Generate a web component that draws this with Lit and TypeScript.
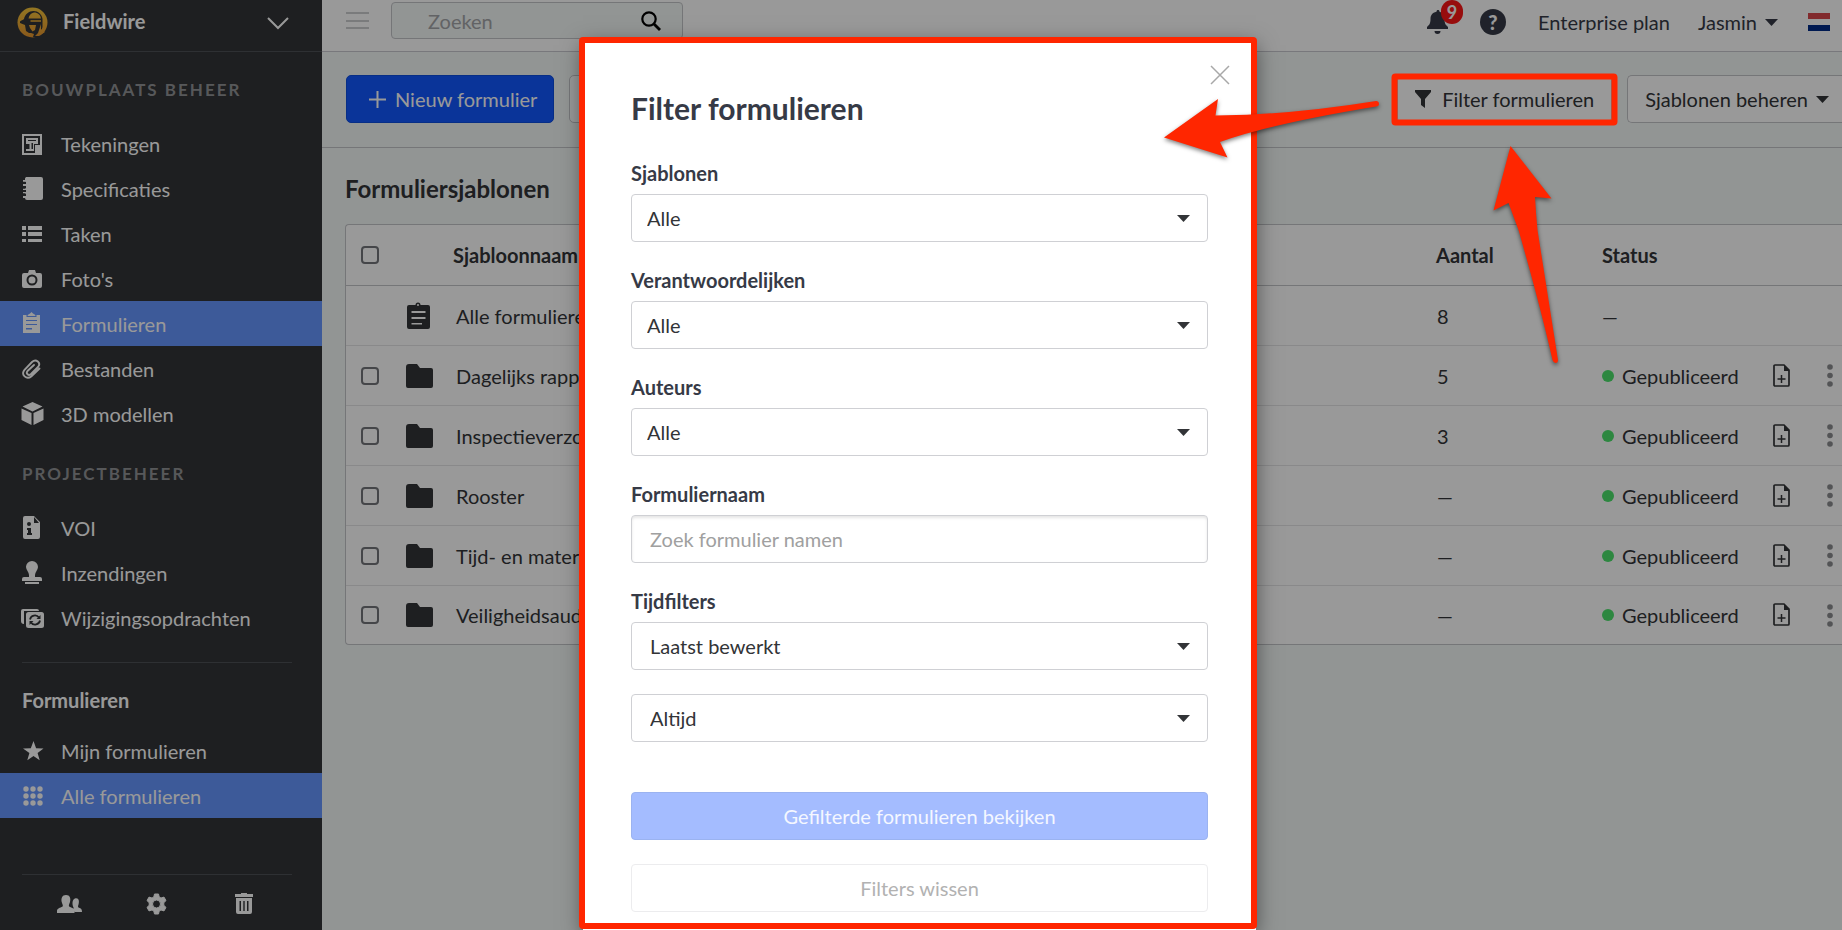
import { LitElement, html, css, svg, nothing } from "lit";
import { customElement } from "lit/decorators.js";

const shapes: Record<string, unknown> = {
  plan: svg`<path fill-rule="evenodd" d="M0 1h20v21H0zM2 3v17h8v-2H6v-2h1V9H4.500V5H16v4h-4v11h6V3z"/><path d="M2 3h16v9h-5v8H2z" fill="#323437"/><path d="M4 5h12v6h-4v7H4v-2h2v-5H4z"/><path d="M5.500 11h2v5h-2zM9.500 10h1.500v6H9.500zM6 7h8v1H6z" fill="#323437"/><path d="M13 12h6v9h-6z"/>`,
  notebook: svg`<path d="M4 0h15a2 2 0 0 1 2 2v19a2 2 0 0 1-2 2H5a2 2 0 0 1-2-2H1v-2h3v-2H1v-2h3v-2H1v-2h3V9H1V7h3V5H1V3h2a3 3 0 0 1 1-3z"/><path d="M0 5.500h3.500M0 11h3.500M0 17h3.500" stroke="#323437" stroke-width="1.500"/>`,
  list: svg`<path d="M0 3h4v4H0zM6 3h14v4H6zM0 9h4v4H0zM6 9h14v4H6zM0 16h4v3H0zM6 16h14v3H6z"/>`,
  camera: svg`<path fill-rule="evenodd" d="M6 5l1-3h6l1 3h4a2 2 0 0 1 2 2v11a2 2 0 0 1-2 2H2a2 2 0 0 1-2-2V7a2 2 0 0 1 2-2zM10 6.500a5.500 5.500 0 1 0 0 11 5.500 5.500 0 0 0 0-11zm0 2a3.500 3.500 0 1 1 0 7 3.500 3.500 0 0 1 0-7z"/>`,
  clipboard: svg`<path fill-rule="evenodd" d="M1 3h3.500v2h10V3H18v18H1zM4 8v1h11V8zM4 12v1h11v-1zM4 16v1.500h6V16z"/><path d="M5.500 4c0-1.500 1.500-1.500 2.500-2.500L9.500 0 11 1.500c1 1 2.500 1 2.500 2.500z"/>`,
  clip: svg`<path d="M17.500 9.500l-8 7.700c-5 4.300-11-1.700-7-6.400L10 3c4-3.800 9.500.8 6 5l-7 7c-2.500 2.300-5.500-.5-3.500-3L12 6" fill="none" stroke="currentColor" stroke-width="1.900" stroke-linecap="round"/>`,
  cube: svg`<path d="M10.500 0L20.500 4.500 10.500 9.500.5 4.500zM-.500 6.500L9.500 11v12L-.5 18zM21.500 6.500V18l-10 5V11z"/>`,
  info: svg`<path fill-rule="evenodd" d="M3 0h9l6 6v15a2 2 0 0 1-2 2H3a2 2 0 0 1-2-2V2a2 2 0 0 1 2-2zM12 1v6h5zM7 6a2 2 0 1 0 0 4 2 2 0 0 0 0-4zM5 12v2h1v3H5v2h5v-2H9v-5z"/>`,
  stamp: svg`<path d="M10 0a6 6 0 0 1 6 6c0 3-3 5-3 8v2h5a2 2 0 0 1 2 2v2H0v-2a2 2 0 0 1 2-2h5v-2c0-3-3-5-3-8a6 6 0 0 1 6-6zM3 21h14v2H3z"/>`,
  changes: svg`<path d="M2 0h14a2 2 0 0 1 2 2H3v13a3 3 0 0 1-3-3V2a2 2 0 0 1 2-2z" transform="translate(-1 2)"/><rect x="4" y="5" width="18" height="16" rx="2.500"/><path d="M8 12.500a5 5 0 0 1 9-2M18 13.500a5 5 0 0 1-9 2" fill="none" stroke="#323437" stroke-width="1.800"/><path d="M18.500 8v4h-4zM7.500 18v-4h4z" fill="#323437"/>`,
  star: svg`<path d="M11.500 1l2.600 7.200 7.400.2-5.900 4.600 2.100 7.200-6.200-4.200-6.200 4.200 2.100-7.200L1 8.400l7.800-.2z"/>`,
  grid: svg`<g>${[4, 11, 18].map((y) => [4, 11, 18].map((x) => svg`<circle cx=${x} cy=${y} r="2.700"/>`))}</g>`,
  people: svg`<path d="M13.500 16.500c3-.6 3.500-1 3-2-1.500-3-1.500-8 1.500-9 4-1 4.500 3 3.500 6-.5 1.700-1 2.500.5 3.200 2 .8 3 1.300 3 4.300h-7z"/><path d="M9 2c4 0 5 3.500 4 7-.6 2-1.500 3-1 4.200 1 1.300 5 1.500 5.500 4.300V20H0v-2.500c.5-2.800 5-3 5.700-4.300.6-1.200-.6-2.200-1-4.200C4 5.500 5 2 9 2z"/>`,
  gear: svg`<path fill-rule="evenodd" stroke="currentColor" stroke-linejoin="round" d="M8.500 0h4l.7 3 1.800 1 3-.9 2 3.500-2.200 2.100v2.600l2.200 2.100-2 3.500-3-.9-1.800 1-.7 3h-4l-.7-3-1.800-1-3 .9-2-3.500 2.200-2.100V8.700L1 6.600l2-3.500 3 .9 1.800-1zm2 6a4 4 0 0 0 0 8 4 4 0 0 0 0-8z"/>`,
  trash: svg`<path fill-rule="evenodd" d="M6 0h6v1h6v3H0V1h6zM1 5h16v14a2 2 0 0 1-2 2H3a2 2 0 0 1-2-2zM4.500 8v10H6V8zM8.300 8v10h1.400V8zM12 8v10h1.500V8z"/>`,
  search: svg`<circle cx="8" cy="8" r="6.700" fill="none" stroke="currentColor" stroke-width="2.200"/><path d="M13 13l6 6" stroke="currentColor" stroke-width="2.800"/>`,
  menu: svg`<path d="M0 1h23M0 9h23M0 16h23" stroke="currentColor" stroke-width="1.500"/>`,
  chevron: svg`<path d="M1 1l10 10L21 1" fill="none" stroke="currentColor" stroke-width="2"/>`,
  bell: svg`<path d="M11 0c1 0 1.500.7 1.500 1.700 3.500.8 5 3.800 5 7.300 0 5 1.500 6 3.500 8v2H0v-2c2-2 3.500-3 3.500-8 0-3.500 1.500-6.500 6-7.300C9.500.7 10 0 11 0zM7.500 21h6a3 3 0 0 1-6 0z"/>`,
  funnel: svg`<path d="M0 0h16v2l-6 7v9l-4-3V9L0 2z"/>`,
  plus: svg`<path d="M8.500 0v17M0 8.500h17" stroke="currentColor" stroke-width="2"/>`,
  caret: svg`<path d="M0 0h13L6.500 7z"/>`,
  close: svg`<path d="M1 1l18 18M19 1L1 19" stroke="currentColor" stroke-width="1.500"/>`,
  folder: svg`<path d="M3 0h8l3 4h11a2 2 0 0 1 2 2v16a2 2 0 0 1-2 2H2a2 2 0 0 1-2-2V3a3 3 0 0 1 3-3z"/>`,
  forms: svg`<path fill-rule="evenodd" d="M3 3h6.500a2.500 2.500 0 0 1 5 0H22a2 2 0 0 1 2 2v20a2 2 0 0 1-2 2H3a2 2 0 0 1-2-2V5a2 2 0 0 1 2-2zM12 2a1 1 0 1 0 0 2 1 1 0 0 0 0-2zM5.500 9v2h14V9zM5.500 15v2h14v-2zM5.500 21v1.500H16V21z"/>`,
  doc: svg`<path d="M2 0h9l5 5v15a1 1 0 0 1-1 1H2a1 1 0 0 1-1-1V1a1 1 0 0 1 1-1z" fill="none" stroke="currentColor" stroke-width="1.700"/><path d="M11 0l5 5v1h-5z"/><path d="M8.500 10v8M4.500 14h8" stroke="currentColor" stroke-width="1.500"/>`,
  dots: svg`<circle cx="3" cy="3" r="2.800"/><circle cx="3" cy="11.500" r="2.800"/><circle cx="3" cy="20" r="2.800"/>`,
  flag: svg`<path d="M0 0h22v6H0z" fill="#d8474c"/><path d="M0 6h22v6H0z" fill="#fff"/><path d="M0 12h22v6H0z" fill="#002a87"/>`,
};

const glyph = (name: string, w: number, h: number) => html`<svg
  class="glyph" width=${w} height=${h} viewBox="0 0 ${w} ${h}" aria-hidden="true">${shapes[name]}</svg>`;

const base = css`
  * { box-sizing: border-box; }
  button, input, select { font: inherit; color: inherit; margin: 0; }
  button { cursor: pointer; }
  .glyph { display: block; flex: none; fill: currentColor; overflow: visible; }
`;

@customElement("fw-sidebar")
class FwSidebar extends LitElement {
  static styles = [base, css`
    :host { display: flex; flex-direction: column; width: 322px; flex: none; background: #323437; color: #fff; }
    .project { display: flex; align-items: center; gap: 15px; height: 52px; padding: 0 33px 6px 17px; border: 0; border-bottom: 1px solid #4e5155; background: none; font-weight: 700; text-align: left; }
    .project .name { flex: 1; line-height: 24px; padding-bottom: 4px; }
    h2 { margin: 0; padding: 28px 22px 21px; font-size: 17px; line-height: 20px; letter-spacing: 2px; text-transform: uppercase; color: #919396; }
    h3 { margin: 0; padding: 25px 22px 16px; font-size: 20px; line-height: 24px; }
    .item { display: flex; align-items: center; gap: 17px; height: 45px; padding: 0 20px; color: inherit; text-decoration: none; }
    .item .icon { display: flex; justify-content: center; width: 24px; }
    .item.active { background: #6696ff; }
    .rule { height: 1px; margin: 22px 30px 0 22px; background: #4e5155; }
    .tools { display: flex; margin: auto 30px 0 22px; padding: 12px 4px 10px; border-top: 1px solid #4e5155; }
    .tools button { display: flex; flex: 1; align-items: center; justify-content: center; height: 33px; padding: 0; border: 0; background: none; }
  `];

  item(icon: string, label: string, active = false, w = 20, h = 22) {
    return html`<a class="item ${active ? "active" : ""}" href="#"><span class="icon">${glyph(icon, w, h)}</span>${label}</a>`;
  }

  render() {
    return html`
      <button class="project">
        <svg class="glyph" width="31" height="31" viewBox="0 0 31 31" aria-hidden="true">
          <defs><linearGradient id="gold" gradientUnits="userSpaceOnUse" x1="0" y1="0" x2="0" y2="31"><stop offset="0" stop-color="#f5c63a"/><stop offset="1" stop-color="#e6942f"/></linearGradient></defs>
          <circle cx="15.500" cy="15.500" r="15" fill="url(#gold)"/>
          <path d="M3 14.500C5 13 6.500 13 7 12 8 7 12 4 16.500 4S25 7.500 25.500 12v8L24 25l-2 5h-6l1-3-3-1-2 0-3-2-1-6-5-2z" fill="#323437"/>
          <path d="M11.500 11.500c.5-3.500 2.500-5.500 5.500-6 4 0 6.500 2.500 7 6zM13.500 13.300h10.500v1.500H13.500zM12 18h7l-1 5-2.500 1.500L13 21zM24 17v5l4 3-6 4h-4l3-3z" fill="url(#gold)"/>
        </svg>
        <span class="name">Fieldwire</span>${glyph("chevron", 22, 12)}
      </button>
      <h2>Bouwplaats beheer</h2>
      <nav>
        ${this.item("plan", "Tekeningen")}
        ${this.item("notebook", "Specificaties", false, 20, 23)}
        ${this.item("list", "Taken")}
        ${this.item("camera", "Foto's")}
        ${this.item("clipboard", "Formulieren", true, 20, 23)}
        ${this.item("clip", "Bestanden", false, 20, 20)}
        ${this.item("cube", "3D modellen", false, 21, 23)}
      </nav>
      <h2>Projectbeheer</h2>
      <nav>
        ${this.item("info", "VOI", false, 20, 23)}
        ${this.item("stamp", "Inzendingen", false, 20, 23)}
        ${this.item("changes", "Wijzigingsopdrachten", false, 20, 22)}
      </nav>
      <div class="rule"></div>
      <h3>Formulieren</h3>
      <nav>
        ${this.item("star", "Mijn formulieren", false, 20, 22)}
        ${this.item("grid", "Alle formulieren", true, 20, 22)}
      </nav>
      <div class="tools">
        <button aria-label="Personen">${glyph("people", 25, 21)}</button>
        <button aria-label="Instellingen">${glyph("gear", 21, 20)}</button>
        <button aria-label="Prullenbak">${glyph("trash", 18, 21)}</button>
      </div>`;
  }
}

@customElement("fw-topbar")
class FwTopbar extends LitElement {
  static styles = [base, css`
    :host { display: flex; align-items: flex-start; height: 52px; padding: 2px 12px 0 24px; border-bottom: 1px solid #c8c9cf; background: #fff; }
    .plain { display: flex; align-items: center; padding: 0; border: 0; background: none; }
    .menu { height: 37px; color: #bcbdc0; margin-right: 22px; }
    .search { display: flex; align-items: center; width: 292px; height: 37px; padding: 0 22px 0 36px; border: 1px solid #c4c5c9; border-radius: 4px; background: #f4f8f7; }
    .search input { flex: 1; min-width: 0; padding: 0; border: 0; outline: 0; background: none; }
    .search input::placeholder { color: #a3a5a8; opacity: 1; }
    .right { display: flex; align-items: center; height: 40px; margin-left: auto; color: #363a46; }
    .bell { position: relative; }
    .badge { position: absolute; left: 14px; top: -10px; width: 22px; height: 24px; border-radius: 12px; background: #fc1616; color: #fff; font-size: 18px; line-height: 24px; font-weight: 700; text-align: center; }
    .help { justify-content: center; width: 26px; height: 26px; margin: 0 32px; border-radius: 50%; background: #363a46; color: #fff; font-weight: 900; line-height: 26px; }
    .user { gap: 8px; margin: 0 31px 0 28px; }
  `];
  render() {
    return html`
      <button class="plain menu" aria-label="Menu">${glyph("menu", 23, 17)}</button>
      <label class="search"><input type="search" placeholder="Zoeken" aria-label="Zoeken" />${glyph("search", 19, 19)}</label>
      <div class="right">
        <button class="plain bell" aria-label="Meldingen">${glyph("bell", 21, 24)}<span class="badge">9</span></button>
        <button class="plain help" aria-label="Help">?</button>
        <span>Enterprise plan</span>
        <button class="plain user">Jasmin ${glyph("caret", 12, 6)}</button>
        <button class="plain" aria-label="Taal">${glyph("flag", 22, 18)}</button>
      </div>`;
  }
}

@customElement("fw-templates")
class FwTemplates extends LitElement {
  rows = [
    { name: "Alle formulieren", count: "8", all: true },
    { name: "Dagelijks rapport", count: "5" },
    { name: "Inspectieverzoek", count: "3" },
    { name: "Rooster", count: "—" },
    { name: "Tijd- en materiaal", count: "—" },
    { name: "Veiligheidsaudit", count: "—" },
  ] as { name: string; count: string; all?: boolean }[];

  static styles = [base, css`
    :host { display: block; padding: 24px 0 0 23px; color: #323437; }
    h1 { margin: 0 0 19px; font-size: 24px; line-height: 33px; }
    .frame { border: 1px solid #c4c5c9; border-right: 0; border-radius: 4px 0 0 4px; background: #fff; }
    table { width: 100%; table-layout: fixed; border-spacing: 0; }
    th, td { height: 60px; padding: 0; border-bottom: 1px solid #e4e5e6; text-align: left; font-weight: 400; white-space: nowrap; }
    th { height: 61px; border-color: #c4c5c9; font-weight: 700; }
    tr:last-child td { height: 58px; border-bottom: 0; }
    thead tr:last-child th { border-bottom: 1px solid #c4c5c9; }
    .c-check { width: 60px; } .c-icon { width: 47px; } .c-count { width: 166px; }
    .c-status { width: 171px; } .c-add { width: 51px; } .c-more { width: 18px; }
    .check { padding-left: 15px; }
    input { display: block; appearance: none; width: 18px; height: 18px; border: 2px solid #73757a; border-radius: 4px; background: #fff; }
    .name { padding-left: 3px; }
    .count { padding-left: 1px; }
    .status { display: flex; align-items: center; gap: 8px; }
    .status::before { content: ""; width: 12px; height: 12px; border-radius: 50%; background: #4be16b; }
    .act { display: block; padding: 0; border: 0; background: none; }
    .more { color: #8b8c8f; padding-left: 3px; }
  `];

  render() {
    return html`
      <h1>Formuliersjablonen</h1>
      <div class="frame"><table>
        <colgroup><col class="c-check"><col class="c-icon"><col><col class="c-count"><col class="c-status"><col class="c-add"><col class="c-more"></colgroup>
        <thead><tr>
          <th class="check"><input type="checkbox" aria-label="Alles selecteren" /></th><th></th>
          <th>Sjabloonnaam</th><th>Aantal</th><th>Status</th><th></th><th></th>
        </tr></thead>
        <tbody>${this.rows.map((r) => html`<tr>
          <td class="check">${r.all ? nothing : html`<input type="checkbox" aria-label=${r.name} />`}</td>
          <td>${r.all ? glyph("forms", 24, 27) : glyph("folder", 27, 24)}</td>
          <td class="name">${r.name}</td>
          <td class="count">${r.count}</td>
          <td>${r.all ? "—" : html`<span class="status">Gepubliceerd</span>`}</td>
          <td>${r.all ? nothing : html`<button class="act" aria-label="Formulier toevoegen">${glyph("doc", 17, 22)}</button>`}</td>
          <td>${r.all ? nothing : html`<button class="act more" aria-label="Meer">${glyph("dots", 6, 23)}</button>`}</td>
        </tr>`)}</tbody>
      </table></div>`;
  }
}

@customElement("fw-filter-dialog")
class FwFilterDialog extends LitElement {
  static styles = [base, css`
    :host { position: relative; display: block; width: 673px; min-height: 891px; padding: 53px 48px 18px; background: #fff; color: #363a46; box-shadow: 0 6px 20px rgba(0, 0, 0, .5); }
    .outline { position: absolute; inset: -2px -1px 1px -4px; border: 6px solid #ff2600; border-radius: 4px; pointer-events: none; }
    .close { position: absolute; top: 26px; right: 26px; display: block; padding: 0; border: 0; background: none; color: #a8a8a8; }
    h2 { margin: 0 0 37px; font-size: 30px; line-height: 32px; }
    .group { display: flex; flex-direction: column; margin-bottom: 26px; }
    label { font-weight: 700; line-height: 24px; margin-bottom: 9px; }
    .field { display: grid; align-items: center; color: #323437; }
    .field + .field { margin-top: 24px; }
    .field > * { grid-area: 1 / 1; }
    .field .glyph { justify-self: end; margin-right: 18px; pointer-events: none; }
    select, input { appearance: none; width: 100%; height: 48px; padding: 0 15px; border: 1px solid #cfd0d4; border-radius: 4px; outline: 0; background: #fff; }
    .wide { padding: 0 18px; }
    input { box-shadow: inset 0 2px 3px rgba(0, 0, 0, .1); }
    input::placeholder { color: #a0a0a0; opacity: 1; }
    .action { display: block; width: 100%; height: 48px; border: 1px solid #9bb3f0; border-radius: 4px; background: #a4bcff; color: #f4f7ff; }
    .first { margin-top: 50px; }
    .action + .action { margin-top: 24px; border-color: #ececee; background: #fff; color: #b2b2b2; }
  `];

  select(id: string, value: string, wide = false) {
    return html`<div class="field"><select id=${id} class=${wide ? "wide" : ""} aria-label=${value}><option>${value}</option></select>${glyph("caret", 13, 7)}</div>`;
  }

  render() {
    return html`
      <div class="outline"></div>
      <button class="close" aria-label="Sluiten">${glyph("close", 20, 20)}</button>
      <h2>Filter formulieren</h2>
      <div class="group"><label for="tpl">Sjablonen</label>${this.select("tpl", "Alle")}</div>
      <div class="group"><label for="resp">Verantwoordelijken</label>${this.select("resp", "Alle")}</div>
      <div class="group"><label for="auth">Auteurs</label>${this.select("auth", "Alle")}</div>
      <div class="group"><label for="name">Formuliernaam</label><input id="name" class="wide" placeholder="Zoek formulier namen" /></div>
      <div class="group"><label for="time">Tijdfilters</label>${this.select("time", "Laatst bewerkt", true)}${this.select("range", "Altijd", true)}</div>
      <button class="action first">Gefilterde formulieren bekijken</button>
      <button class="action">Filters wissen</button>`;
  }
}

@customElement("app-root")
class AppRoot extends LitElement {
  static styles = [base, css`
    :host { position: relative; display: flex; height: 100vh; overflow: hidden; font: 20px/24px Lato, "Open Sans", sans-serif; background: #f4f8f7; }
    main { flex: 1; min-width: 0; }
    .toolbar { display: flex; justify-content: space-between; height: 96px; padding: 23px 0 0 24px; border-bottom: 1px solid #c4c5c9; color: #323437; }
    .set { display: flex; gap: 15px; }
    .btn { display: flex; align-items: center; height: 48px; padding: 0 17px; border: 1px solid #c4c5c9; border-radius: 5px; background: #fff; white-space: nowrap; }
    .primary { gap: 9px; padding: 0 16px 0 22px; border-color: #0d4de0; background: #1158ff; color: #fff; }
    .actions { width: 64px; }
    .filter { gap: 11px; }
    .manage { gap: 8px; padding: 0 12px 0 17px; border-right: 0; border-radius: 5px 0 0 5px; }
    .shade { position: absolute; inset: 0; display: flex; justify-content: center; align-items: flex-start; padding: 39px 3px 0 0; background: rgba(0, 0, 0, .4); }
    .marks { position: absolute; top: 0; right: 0; width: 700px; height: 400px; pointer-events: none; }
    .arrows { filter: drop-shadow(0 2px 2px rgba(0, 0, 0, .5)); }
  `];

  render() {
    return html`
      <fw-sidebar></fw-sidebar>
      <main>
        <fw-topbar></fw-topbar>
        <div class="toolbar">
          <div class="set">
            <button class="btn primary">${glyph("plus", 17, 17)}Nieuw formulier</button>
            <button class="btn actions" aria-label="Acties"></button>
          </div>
          <div class="set">
            <button class="btn filter">${glyph("funnel", 16, 18)}Filter formulieren</button>
            <button class="btn manage">Sjablonen beheren ${glyph("caret", 14, 7)}</button>
          </div>
        </div>
        <fw-templates></fw-templates>
      </main>
      <div class="shade"><fw-filter-dialog></fw-filter-dialog></div>
      <svg class="marks" viewBox="1142 0 700 400" aria-hidden="true">
        <rect x="1394.500" y="76.500" width="220" height="46" rx="1" fill="none" stroke="#ff2600" stroke-width="6" stroke-linejoin="round"/>
        <g class="arrows" fill="#ff2600">
          <path d="M1164 137.500L1218 99l-2.500 16.500Q1290 115 1376 101q3 0 3 3 0 2-3 2.500Q1270 124 1220 142l7.500 15.500z"/>
          <path d="M1510.500 146l41 52.500-16.500-1.500Q1536 215 1537.500 230L1558 360q0 3-2.500 3-2 0-3-3Q1540 305 1518.500 230L1508.500 203l-15 7.500z"/>
        </g>
      </svg>`;
  }
}
